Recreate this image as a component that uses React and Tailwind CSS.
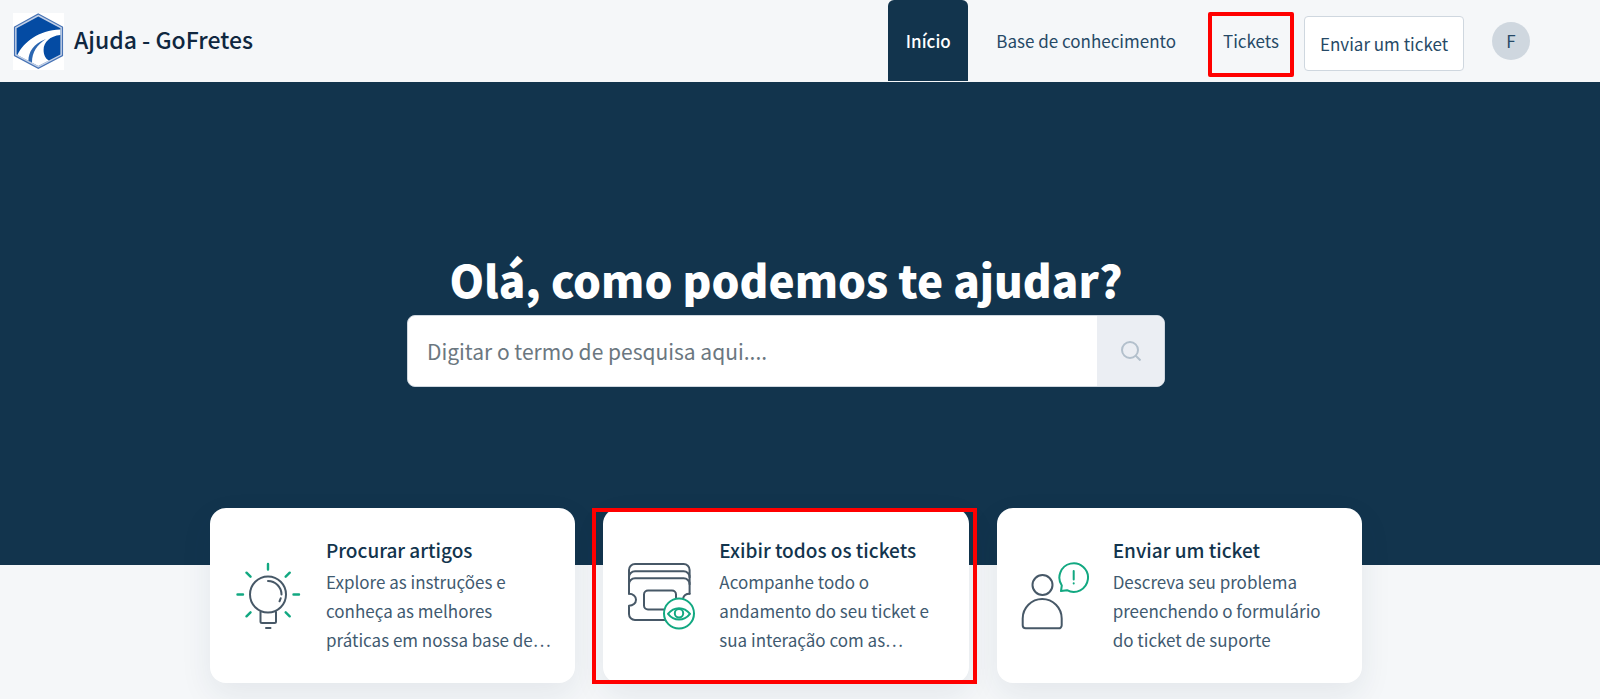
import React from "react";

function Logo() {
  return (
    <svg className="h-[57px] w-[51px] shrink-0" viewBox="0 0 51 57" aria-hidden="true">
      <rect width="51" height="57" fill="#fff" />
      <path d="M25.3 1 49.5 14V42.6L25.3 55.4 1.5 42.6V14Z" fill="#c3d0e6" stroke="#4773b5" strokeWidth="1.2" />
      <path d="M25.3 3.4 47.4 15.2V41.4L25.3 53 3.6 41.4V15.2Z" fill="#044ba3" />
      <path
        d="M4.4 42C11 29 25 17.5 47.4 16.6V22C37 23 30.6 29 30.6 37C30.6 42 32.6 46 36 47.4L25.3 53Z"
        fill="#fff"
      />
      <path d="M15.4 47.8C15.6 39 20 31 33 26C24 32 19 39 19 49.6Z" fill="#2b66b1" />
    </svg>
  );
}

function BulbIcon() {
  return (
    <svg className="size-[68px] shrink-0" viewBox="0 0 68 68" fill="none" strokeWidth="2" strokeLinecap="round" aria-hidden="true">
      <g stroke="#475867">
        <circle cx="34" cy="32.5" r="18" />
        <path d="M26.5 50v9.5a1.5 1.5 0 0 0 1.5 1.5h12.5a1.5 1.5 0 0 0 1.5-1.5V50" />
        <path d="M34 19a13.5 13.5 0 0 1 13.5 13.5M46.7 36.3l-1.2 3M32 66h4.5" />
      </g>
      <path
        stroke="#12a881"
        strokeWidth="2.4"
        d="M34 2v5.5M3.5 32.5h5.5M59.5 32.5H65M12.5 10.7l4 4M12.5 54.3l4-4M55.7 10.7l-4 4M55.7 54.3l-4-4"
      />
    </svg>
  );
}

function TicketsIcon() {
  return (
    <svg className="size-[68px] shrink-0" viewBox="0 0 68 68" fill="none" strokeWidth="2" strokeLinecap="round" strokeLinejoin="round" aria-hidden="true">
      <g stroke="#475867">
        <path d="M2 31.7V8a6 6 0 0 1 6-6h48.6a6 6 0 0 1 6 6v23.7" />
        <path d="M2 15.2a6 6 0 0 1 6-6h48.6a6 6 0 0 1 6 6" />
        <path d="M2 22.3a6 6 0 0 1 6-6h48.6a6 6 0 0 1 6 6" />
        <path d="M2 31.7c4 0 7 2.6 7 6s-3 6-7 6V52a6 6 0 0 0 6 6H38M62.6 31.7c-3.5 0-6 2-6.6 5" />
        <rect x="17" y="28.5" width="32" height="19" rx="4" />
      </g>
      <g stroke="#12a881">
        <circle cx="52" cy="51.5" r="15" fill="#fff" />
        <path d="M41 51.9c6-7.6 16-7.6 22 0c-6 7.6-16 7.6-22 0Z" />
        <circle cx="52" cy="51.2" r="4.2" />
      </g>
    </svg>
  );
}

function PersonIcon() {
  return (
    <svg className="size-[68px] shrink-0" viewBox="0 0 68 68" fill="none" strokeWidth="2" strokeLinecap="round" strokeLinejoin="round" aria-hidden="true">
      <g stroke="#475867">
        <circle cx="21.5" cy="23" r="10" />
        <path d="M1.7 56.5a19.5 19.5 0 0 1 39 0v6.8a3 3 0 0 1-3 3h-33a3 3 0 0 1-3-3Z" />
      </g>
      <g stroke="#12a881">
        <path d="M40.8 23.5A14.3 14.3 0 1 1 46 28.2L40 29Z" />
        <path d="M52.7 9v8.5M52.7 21.2v.3" />
      </g>
    </svg>
  );
}

const cards = [
  {
    title: "Procurar artigos",
    lines: ["Explore as instruções e", "conheça as melhores", "práticas em nossa base de…"],
    icon: BulbIcon,
  },
  {
    title: "Exibir todos os tickets",
    lines: ["Acompanhe todo o", "andamento do seu ticket e", "sua interação com as…"],
    icon: TicketsIcon,
    highlighted: true,
  },
  {
    title: "Enviar um ticket",
    lines: ["Descreva seu problema", "preenchendo o formulário", "do ticket de suporte"],
    icon: PersonIcon,
  },
];

function HelpCard({ card }) {
  const Icon = card.icon;

  return (
    <a
      href="#"
      className="relative flex items-center gap-6 rounded-2xl bg-white px-6 pt-[26px] pb-[29px] shadow-[0_12px_32px_rgba(24,50,71,0.08)]"
    >
      <div className="pt-[3px]">
        <Icon />
      </div>
      <div className="whitespace-nowrap">
        <h2 className="mb-px text-[19px] leading-8 font-medium text-[#12344d]">{card.title}</h2>
        <p className="text-[17px] leading-[29px] font-normal text-[#3f5a70]">
          {card.lines.map((line) => (
            <span key={line} className="block">{line}</span>
          ))}
        </p>
      </div>
      {card.highlighted && (
        <span className="pointer-events-none absolute top-0 -right-2 -bottom-px -left-[11px] border-4 border-[#ff0000]" />
      )}
    </a>
  );
}

export default function App() {
  return (
    <div className="min-h-screen bg-[#f5f7f9] font-['Noto_Sans_CJK_SC','Noto_Sans',sans-serif] text-[#12344d]">
      <header className="flex h-[82px] items-start justify-between pr-[70px] pl-[13px]">
        <a href="#" className="flex items-start gap-[10px] pt-[13px]">
          <Logo />
          <span className="pt-[10px] text-[23px] leading-8 font-medium text-[#0f2740]">Ajuda - GoFretes</span>
        </a>

        <nav className="flex h-[81px] items-center text-[17px] leading-6 font-normal text-[#264966]">
          <a href="#" className="flex h-[81px] w-20 items-center justify-center rounded-t-md bg-[#12344d] font-medium text-white">
            Início
          </a>
          <a href="#" className="ml-7">Base de conhecimento</a>
          <a href="#" className="relative ml-8 flex h-[65px] w-[86px] items-center justify-center">
            Tickets
            <span className="pointer-events-none absolute inset-x-0 top-1 -bottom-1 rounded-xs border-4 border-[#ff0000]" />
          </a>
          <button type="button" className="mt-[6px] ml-[10px] h-[55px] w-40 rounded border border-[#cfd7df] bg-white">
            Enviar um ticket
          </button>
          <button type="button" className="ml-7 size-[38px] rounded-full bg-[#cfd7df]">F</button>
        </nav>
      </header>

      <main>
        <section className="bg-[#12344d] pt-[165px] pr-7 pb-[178px]">
          <h1 className="pb-[3px] text-center text-[44px] leading-[65px] font-black text-white">
            Olá, como podemos te ajudar?
          </h1>
          <form className="mx-auto flex h-[72px] max-w-[758px] overflow-hidden rounded-lg border border-[#cfd7df] bg-white">
            <input
              type="text"
              aria-label="Pesquisar"
              placeholder="Digitar o termo de pesquisa aqui...."
              className="min-w-0 flex-1 px-[19px] pb-px text-[21px] leading-8 font-normal outline-none placeholder:text-[#6b7780]"
            />
            <button type="submit" aria-label="Pesquisar" className="flex w-[67px] items-center justify-center bg-[#ebeef3]">
              <svg className="size-5" viewBox="0 0 20 20" fill="none" stroke="#b3c0cc" strokeWidth="2" aria-hidden="true">
                <circle cx="9" cy="9" r="8" />
                <path d="M14.5 14.5 19.5 19.5" />
              </svg>
            </button>
          </form>
        </section>

        <section className="-mt-[57px] pr-7 pb-4">
          <div className="mx-auto grid max-w-[1152px] grid-cols-3 gap-7">
            {cards.map((card) => (
              <HelpCard key={card.title} card={card} />
            ))}
          </div>
        </section>
      </main>
    </div>
  );
}
